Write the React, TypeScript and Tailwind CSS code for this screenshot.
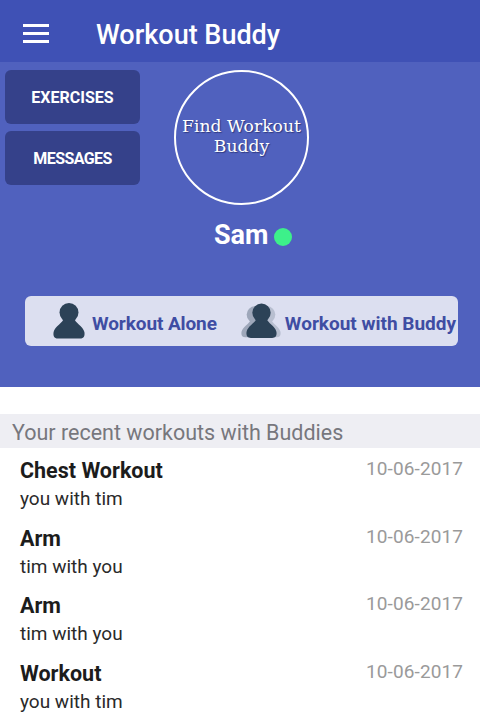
const workouts = [
  { title: "Chest Workout", who: "you with tim" },
  { title: "Arm", who: "tim with you" },
  { title: "Arm", who: "tim with you" },
  { title: "Workout", who: "you with tim" },
];

function PersonIcon({ className }: { className?: string }) {
  return (
    <svg viewBox="0 0 32 36" className={className} fill="#2c4257">
      <ellipse cx="16" cy="9.5" rx="9.5" ry="9.5" />
      <path d="M11 15 C10 20 2 23 0.6 29 C0 33 1 35.5 5 35.5 H27 C31 35.5 32 33 31.4 29 C30 23 22 20 21 15 Z" />
    </svg>
  );
}

export default function App() {
  return (
    <div className="h-[728px] w-[480px] overflow-hidden bg-white font-['Roboto',sans-serif]">
      <header className="flex h-[62px] items-center bg-[#3f51b5] pt-[4px] pl-[23px]">
        <div className="flex w-[26px] flex-col gap-[5px]">
          <span className="h-[3px] bg-white" />
          <span className="h-[3px] bg-white" />
          <span className="h-[3px] bg-white" />
        </div>
        <h1 className="mt-[4px] ml-[47px] text-[27px] font-medium text-white">Workout Buddy</h1>
      </header>

      <section className="h-[325px] bg-[#5061be] pt-2">
        <div className="flex items-start">
          <div className="ml-[5px] flex w-[135px] flex-col gap-[7px]">
            <button className="h-[54px] rounded-md bg-[#35418a] pt-[2px] text-[16px] font-bold text-white">EXERCISES</button>
            <button className="h-[54px] rounded-md bg-[#35418a] pt-[2px] text-[16px] font-bold tracking-[-0.6px] text-white">MESSAGES</button>
          </div>
          <div className="ml-[34px] flex h-[135px] w-[135px] shrink-0 items-center justify-center rounded-full border-2 border-white pb-[4px] text-center font-['DejaVu_Serif',serif] text-[17.2px] leading-[20px] text-white [text-shadow:1px_1px_1px_#2f3a80]">
            Find Workout Buddy
          </div>
        </div>
        <div className="mt-[14px] flex items-center pl-[214px]">
          <span className="text-[27px] leading-[32px] font-bold text-white">Sam</span>
          <span className="mt-[4px] ml-[6px] h-[18px] w-[18px] rounded-full bg-[#3df08a]" />
        </div>
        <div className="mt-[45px] ml-[25px] flex h-[50px] w-[433px] items-center rounded-md bg-[#dcdff0] pl-[28px] text-[19px] font-bold text-[#3f4da3]">
          <PersonIcon className="h-[36px] w-[32px]" />
          <span className="mt-[6px] ml-[7px] tracking-[-0.1px]">Workout Alone</span>
          <div className="relative ml-[24px] h-[36px] w-[40px]">
            <PersonIcon className="absolute top-[3px] left-0 h-[32px] w-[28px] opacity-35" />
            <PersonIcon className="absolute top-[3px] right-0 h-[32px] w-[28px] opacity-20" />
            <PersonIcon className="absolute top-0 left-[5px] h-[36px] w-[31px]" />
          </div>
          <span className="mt-[6px] ml-[4px] whitespace-nowrap">Workout with Buddy</span>
        </div>
      </section>

      <h2 className="mt-[27px] flex h-[34px] items-center bg-[#eeeef3] pt-[5px] pl-3 text-[21.5px] text-[#77777d]">
        Your recent workouts with Buddies
      </h2>
      <ul>
        {workouts.map((w, i) => (
          <li key={i} className="flex h-[67.5px] justify-between pt-[9px] pr-[17px] pl-5">
            <div>
              <p className="text-[21.5px] leading-[28px] font-bold text-[#1c1c1c]">{w.title}</p>
              <p className="text-[19px] leading-[28px] text-[#2a2a2a]">{w.who}</p>
            </div>
            <span className="text-[19px] leading-[24px] tracking-[0.1px] text-[#9a9a9a]">10-06-2017</span>
          </li>
        ))}
      </ul>
    </div>
  );
}
